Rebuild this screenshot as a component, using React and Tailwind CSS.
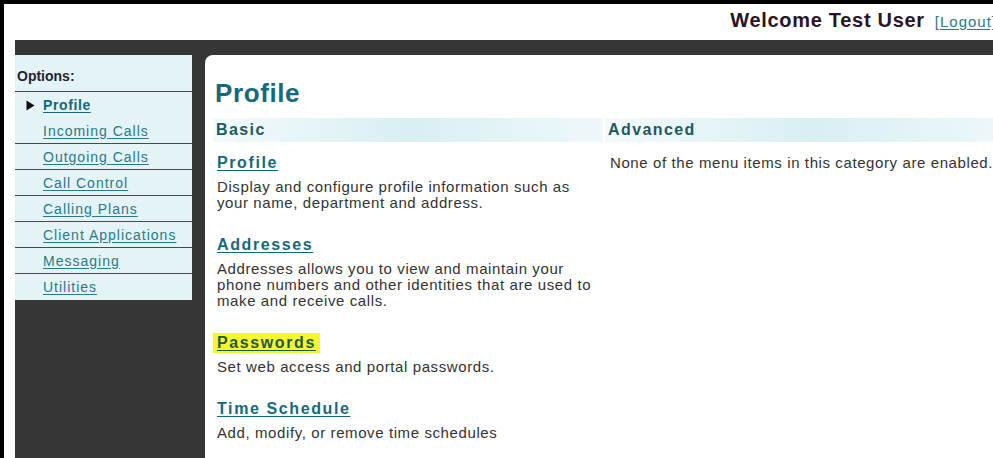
import React from "react";

const menu = [
  { label: "Profile", active: true },
  { label: "Incoming Calls" },
  { label: "Outgoing Calls" },
  { label: "Call Control" },
  { label: "Calling Plans" },
  { label: "Client Applications" },
  { label: "Messaging" },
  { label: "Utilities", last: true },
];

const basicItems = [
  {
    title: "Profile",
    text: [
      "Display and configure profile information such as",
      "your name, department and address.",
    ],
  },
  {
    title: "Addresses",
    text: [
      "Addresses allows you to view and maintain your",
      "phone numbers and other identities that are used to",
      "make and receive calls.",
    ],
  },
  {
    title: "Passwords",
    text: ["Set web access and portal passwords."],
    highlight: true,
  },
  {
    title: "Time Schedule",
    text: ["Add, modify, or remove time schedules"],
  },
];

function Arrow() {
  return (
    <svg width="9" height="11" viewBox="0 0 9 11" className="shrink-0">
      <path d="M0.5 0.5 L8.5 5.5 L0.5 10.5 Z" fill="#111" />
    </svg>
  );
}

function Sidebar() {
  return (
    <aside className="w-[177px] shrink-0">
      <div className="bg-[#e4f3f5]">
        {/* options title */}
        <div className="h-[37px] border-b border-[#4a4a4a] pl-[2px] pt-[13px] text-[14px] font-bold leading-[16px] text-[#2b1f33]">
          Options:
        </div>

        {menu.map((item) => (
          <div
            key={item.label}
            className={`box-border flex h-[26px] items-center ${
              item.active || item.last ? "" : "border-b border-[#4a4a4a]"
            }`}
          >
            <div className="flex w-[28px] justify-center pl-[2px]">
              {item.active && <Arrow />}
            </div>
            <a
              href="#"
              className={`text-[14px] leading-[16px] underline underline-offset-2 ${
                item.active
                  ? "font-bold tracking-[0.6px] text-[#17697a]"
                  : "tracking-[1px] text-[#2a7a8c]"
              }`}
            >
              {item.label}
            </a>
          </div>
        ))}
      </div>
    </aside>
  );
}

function SectionBar({ children }) {
  return (
    <h2 className="flex h-[24px] items-center bg-linear-to-r from-[#f3fafb] via-[#d9eff3] to-[#eef8fa] pl-[3px] text-[16px] font-bold tracking-[1.4px] text-[#1d5b60]">
      {children}
    </h2>
  );
}

function App() {
  return (
    <div className="h-[458px] w-[993px] overflow-hidden border-l-4 border-t-4 border-black bg-white font-['Liberation_Sans',Arial,sans-serif]">
      <div className="w-[1012px]">
        {/* top header */}
        <header className="flex h-[36px] items-center justify-end gap-[10px] pb-[4px] pr-[19px]">
          <span className="text-[20px] font-bold tracking-[0.7px] text-[#2b1424]">
            Welcome Test User
          </span>
          <a
            href="#"
            className="pt-[4px] text-[15px] tracking-[1px] text-[#2a7a8c] underline underline-offset-2"
          >
            [Logout]
          </a>
        </header>

        {/* dark frame */}
        <div className="ml-[11px] flex h-[418px] gap-[13px] bg-[#363636] pt-[15px]">
          <Sidebar />

          <main className="flex-1 rounded-tl-[8px] bg-white pl-[8px] pt-[23px]">
            <h1 className="pl-[2px] text-[26px] font-bold leading-[30px] tracking-[0.6px] text-[#17697a]">
              Profile
            </h1>

            <div className="mt-[10px] flex gap-[2px]">
              <section className="w-[390px]">
                <SectionBar>Basic</SectionBar>
                <div className="flex flex-col gap-[24px] pl-[4px] pt-[11px]">
                  {basicItems.map((item) => (
                    <div key={item.title}>
                      <a
                        href="#"
                        className={`block w-fit text-[16px] font-bold leading-[20px] tracking-[1.6px] underline underline-offset-2 ${
                          item.highlight
                            ? "-ml-[4px] bg-[#f7f72e] px-[4px] text-[#1f5a45]"
                            : "text-[#17697a]"
                        }`}
                      >
                        {item.title}
                      </a>
                      <div className="mt-[6px] text-[15px] leading-[16px] tracking-[0.6px] text-[#333]">
                        {item.text.map((line) => (
                          <div key={line}>{line}</div>
                        ))}
                      </div>
                    </div>
                  ))}
                </div>
              </section>

              <section className="flex-1">
                <SectionBar>Advanced</SectionBar>
                <p className="mt-[13px] pl-[5px] text-[15px] leading-[16px] tracking-[0.6px] text-[#333]">
                  None of the menu items in this category are enabled.
                </p>
              </section>
            </div>
          </main>
        </div>
      </div>
    </div>
  );
}

export default App;
